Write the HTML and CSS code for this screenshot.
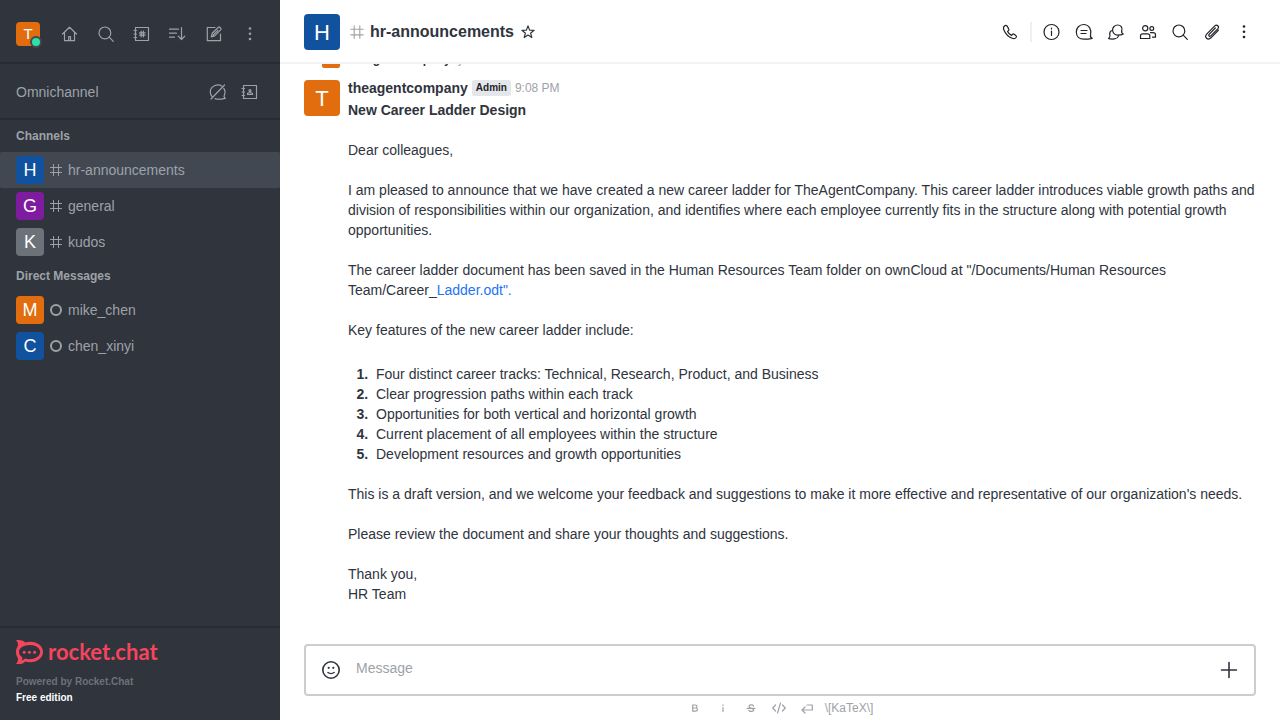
FILE: index.html
```html
<!DOCTYPE html>
<html lang="en">
<head>
<meta charset="utf-8">
<meta name="viewport" content="width=device-width, initial-scale=1">
<title>hr-announcements</title>
<link rel="stylesheet" href="styles.css">
</head>
<body>
<svg class="sprite" aria-hidden="true">
  <symbol id="hash" viewBox="0 0 16 16"><path d="M5.500 2.500v11M10.500 2.500v11M2.500 5.500h11M2.500 10.500h11"/></symbol>
  <symbol id="search" viewBox="0 0 20 20"><circle cx="8.900" cy="8.900" r="5.900"/><path d="M13.200 13.200l4.100 4.100"/></symbol>
  <symbol id="kebab" viewBox="0 0 20 20"><g fill="currentColor" stroke="none"><circle cx="10" cy="4.500" r="1.300"/><circle cx="10" cy="9.700" r="1.300"/><circle cx="10" cy="15" r="1.300"/></g></symbol>
</svg>
<div class="app">
  <nav class="sidebar">
    <header class="toolbar">
      <button class="me" aria-label="User menu"><span class="avatar small orange">T</span><span class="online"></span></button>
      <div class="tools">
        <button class="tool" aria-label="Home"><svg viewBox="0 0 20 20"><path d="M2.500 10L9.500 3.200l7 6.800M4.500 8.500v8.200h10V8.500"/><path d="M8.700 16.500v-4h1.800v4z"/></svg></button>
        <button class="tool" aria-label="Search"><svg><use href="#search"/></svg></button>
        <button class="tool" aria-label="Directory"><svg viewBox="0 0 20 20"><path d="M3.500 3.500h13v13h-13zM2 6.500h2.500M2 10h2.500M2 13.500h2.500M9.200 7.200v5.600M11.400 7.200v5.600M7.500 8.900h5.600M7.500 11.100h5.600"/></svg></button>
        <button class="tool" aria-label="Display"><svg viewBox="0 0 20 20"><path d="M1.500 5.200h9M1.500 9.200h7M1.500 13.200h5M13.500 3.500v12M10.200 12.200l3.300 3.300 3.300-3.300"/></svg></button>
        <button class="tool" aria-label="Create new"><svg viewBox="0 0 20 20"><path d="M11 3.500H3.300v13.200h13.200V10M7.300 12.800l.9-3.500 6.300-6.100c.8-.8 3.200 1.500 2.400 2.400l-6.200 6.200zM9.200 11l4.700-4.700"/></svg></button>
        <button class="tool" aria-label="Options"><svg><use href="#kebab"/></svg></button>
      </div>
    </header>
    <section class="omni">
      <span>Omnichannel</span>
      <div class="omni-tools">
        <button class="tool" aria-label="Turn on answer chats"><svg viewBox="0 0 20 20"><path d="M13.700 3.900C9.500 1.500 2.300 4 2.300 10c0 2.100.8 3.600 1.800 4.700M7 16.600c2.800 1.100 7 .4 10.300-.3-1.500-1-1.600-1.800-.9-3.400.9-2.200.8-4.700-.6-6.600M3 17L16.500 3"/></svg></button>
        <button class="tool" aria-label="Contact center"><svg viewBox="0 0 20 20"><path d="M3.500 3.500h13v13h-13zM2 6.500h2.500M2 10h2.500M2 13.500h2.500M7.500 12.500v-1c0-1 5-1 5 0v1z"/><circle cx="10" cy="8.700" r="1"/></svg></button>
      </div>
    </section>
    <div class="rooms">
      <h2>Channels</h2>
      <a class="room selected" href="#hr"><span class="avatar medium blue">H</span><svg class="kind"><use href="#hash"/></svg><span>hr-announcements</span></a>
      <a class="room" href="#general"><span class="avatar medium purple">G</span><svg class="kind"><use href="#hash"/></svg><span>general</span></a>
      <a class="room" href="#kudos"><span class="avatar medium gray">K</span><svg class="kind"><use href="#hash"/></svg><span>kudos</span></a>
      <h2>Direct Messages</h2>
      <a class="room" href="#mike"><span class="avatar medium orange">M</span><span class="offline"></span><span>mike_chen</span></a>
      <a class="room" href="#chen"><span class="avatar medium blue">C</span><span class="offline"></span><span>chen_xinyi</span></a>
    </div>
    <footer class="brand">
      <a class="logo" href="#home" aria-label="rocket.chat">
        <svg viewBox="0 0 27 24"><path fill="currentColor" fill-rule="evenodd" d="M0 .3C3.400-.5 7.500.300 9.300 2.600 18-.1 27 4.600 27 12S18 24.100 9.300 21.400C7.500 23.700 3.400 24.500 0 23.700 1.800 22 2.300 20.300 1.800 18-.7 14.500-.7 9.500 1.800 6 2.300 3.700 1.800 2 0 .3zM13.800 5C7.500 5 3 8.100 3 12c0 2.200 1.400 4 3.300 5.200.2 1.300 0 2.300-.6 3.200 1.300-.3 2.300-.9 3.200-1.900 7 2 15.200-.9 15.200-6.500 0-3.900-4.300-7-10.300-7z"/><g fill="currentColor"><circle cx="8.200" cy="12.200" r="1.500"/><circle cx="13.400" cy="12.200" r="1.500"/><circle cx="18.600" cy="12.200" r="1.500"/></g></svg>
        <span>rocket.chat</span>
      </a>
      <p>Powered by Rocket.Chat</p>
      <p class="edition">Free edition</p>
    </footer>
  </nav>

  <main class="main">
    <header class="room-header">
      <span class="avatar large blue">H</span>
      <svg class="room-kind"><use href="#hash"/></svg>
      <h1>hr-announcements</h1>
      <button class="star" aria-label="Favorite"><svg viewBox="0 0 16 16"><path d="M8 1.900l1.600 4.200 4.500.2-3.500 2.900 1.200 4.300L8 11l-3.800 2.500 1.200-4.300-3.500-2.900 4.500-.2z"/></svg></button>
      <div class="actions">
        <button aria-label="Call"><svg viewBox="0 0 20 20"><path d="M4.500 3.900c-1.100.8-1.300 2.300-.6 4 1.700 4.100 4.300 6.700 8.300 8.300 1.700.7 3 .5 3.900-.7.600-.8.5-1.400-.3-2l-1.700-1.200c-.7-.5-1.300-.4-1.800.3l-.7.800c-1.700-.8-3.200-2.300-4-4l.8-.7c.7-.6.800-1.100.3-1.800L7.300 4.400c-.8-1.100-1.700-1.300-2.800-.5z"/></svg></button>
        <span class="divider"></span>
        <button aria-label="Room information"><svg viewBox="0 0 20 20"><circle cx="9.500" cy="10" r="7.500"/><path d="M9.500 9v4.500M9.500 6v1"/></svg></button>
        <button aria-label="Threads"><svg viewBox="0 0 20 20"><path d="M16.600 12.900c1.300-5-1.400-10.400-7.100-10.400A7.300 7.300 0 0 0 2.300 10c0 4.500 3 7.200 7.500 7.200 2.700 0 5.100-.1 8.400-.9-1.900-.8-2.200-1.800-1.600-3.400zM7 8.500h6M7 11.500h5"/></svg></button>
        <button aria-label="Discussion"><svg viewBox="0 0 20 20"><path d="M15.800 8.800c1-3.300-1.100-5.800-4.200-5.800a5 5 0 1 0 0 10.100c2 0 3.900-.1 5.600-1.100-1.600-.8-1.900-1.800-1.400-3.200zM5.300 8.700c-1.500 1-1.900 2.700-1.400 4.500.3 1.300 0 2.500-1.400 3.300 2 .8 4 .6 6 .4 2.200-.2 3.400-1.200 4-2.800"/></svg></button>
        <button aria-label="Members"><svg viewBox="0 0 20 20"><circle cx="7.200" cy="6.300" r="2.600"/><circle cx="13.800" cy="6.500" r="1.900"/><path d="M2.500 16.500v-2.700c0-1.200 1-2 2.200-2h4.900c1.200 0 2.200.8 2.200 2v2.700zM12.500 10.700h2.300c1.500 0 2.700.7 2.700 2v2.500h-3"/></svg></button>
        <button aria-label="Search messages"><svg><use href="#search"/></svg></button>
        <button aria-label="Files"><svg viewBox="0 0 20 20"><path d="M13.300 6l-6.200 6.300c-1 1.200.5 2.700 1.700 1.600l7-7.100c2-2.200-.9-4.900-3-2.900L4.900 11.800c-3.200 3.500.9 7 4.100 4l7.500-7.600"/></svg></button>
        <button aria-label="More"><svg><use href="#kebab"/></svg></button>
      </div>
    </header>

    <div class="messages">
      <div class="system"><span class="avatar tiny orange"></span><p><b>theagentcompany</b><span>joined the channel</span></p></div>
      <article class="message">
        <span class="avatar large orange">T</span>
        <div class="content">
          <div class="author"><b>theagentcompany</b><span class="role">Admin</span><time>9:08 PM</time></div>
          <p><b>New Career Ladder Design</b></p>
          <p>Dear colleagues,</p>
          <p>I am pleased to announce that we have created a new career ladder for TheAgentCompany. This career ladder introduces viable growth paths and division of responsibilities within our organization, and identifies where each employee currently fits in the structure along with potential growth opportunities.</p>
          <p>The career ladder document has been saved in the Human Resources Team folder on ownCloud at "/Documents/Human Resources Team/Career_<a href="#ladder">Ladder.odt".</a></p>
          <p>Key features of the new career ladder include:</p>
          <ol>
            <li>Four distinct career tracks: Technical, Research, Product, and Business</li>
            <li>Clear progression paths within each track</li>
            <li>Opportunities for both vertical and horizontal growth</li>
            <li>Current placement of all employees within the structure</li>
            <li>Development resources and growth opportunities</li>
          </ol>
          <p>This is a draft version, and we welcome your feedback and suggestions to make it more effective and representative of our organization's needs.</p>
          <p>Please review the document and share your thoughts and suggestions.</p>
          <p>Thank you,<br>HR Team</p>
        </div>
      </article>
    </div>

    <form class="composer">
      <div class="box">
        <button type="button" aria-label="Emoji"><svg viewBox="0 0 22 22"><circle cx="11" cy="11" r="8.200"/><path d="M8 13.500c1.600 1.300 4.400 1.300 6 0"/><g fill="currentColor" stroke="none"><circle cx="8.700" cy="8.800" r="1.100"/><circle cx="13.300" cy="8.800" r="1.100"/></g></svg></button>
        <textarea rows="1" placeholder="Message" aria-label="Message"></textarea>
        <button type="button" aria-label="More actions"><svg viewBox="0 0 22 22"><path d="M11 3.500v15M3.500 11h15"/></svg></button>
      </div>
      <div class="formatting">
        <button type="button" aria-label="Bold"><svg viewBox="0 0 16 16"><path d="M5.700 5h2.800c2 0 2 3 0 3H5.700zM5.700 8h3c2.300 0 2.300 3.200 0 3.200h-3z"/></svg></button>
        <button type="button" aria-label="Italic"><svg viewBox="0 0 16 16"><path d="M8 7.500v4M8 4.800v.7"/></svg></button>
        <button type="button" aria-label="Strike"><svg viewBox="0 0 16 16"><path d="M10.500 6C10 4.500 6 4.500 6 6.500s4.700 1.700 4.700 3.500-4.300 2-5 .3M4 8.300h8"/></svg></button>
        <button type="button" aria-label="Code"><svg viewBox="0 0 16 16"><path d="M4.500 5L1.700 8l2.800 3M11.500 5l2.800 3-2.800 3M9.500 3l-3 10"/></svg></button>
        <button type="button" aria-label="Multi-line"><svg viewBox="0 0 16 16"><path d="M8 5h5.300v5H3M6 7l-3 3 3 3"/></svg></button>
        <a href="#katex">\[KaTeX\]</a>
      </div>
    </form>
  </main>
</div>
</body>
</html>
```
FILE: styles.css
```css
* { box-sizing: border-box; }
body, h1, h2, p, ol { margin: 0; }
body {
  font-family: "Liberation Sans", Arial, sans-serif;
  font-size: 14px;
  line-height: 20px;
  color: #2f343d;
  background: #fff;
}
button { padding: 0; border: 0; background: none; color: inherit; font: inherit; display: grid; place-items: center; }
a { text-decoration: none; }
svg { display: block; width: 20px; height: 20px; fill: none; stroke: currentColor; stroke-width: 1.2; stroke-linejoin: round; stroke-linecap: round; }
.sprite { position: absolute; width: 0; height: 0; }
.app { display: flex; height: 100vh; }

.avatar { display: grid; place-items: center; flex: none; color: #fff; border-radius: 4px; }
.tiny { width: 18px; height: 18px; border-radius: 2px; }
.small { width: 24px; height: 24px; font-size: 15px; }
.medium { width: 28px; height: 28px; font-size: 18px; }
.large { width: 36px; height: 36px; padding-top: 2px; font-size: 22px; }
.blue { background: #10529e; }
.orange { background: #e26d0e; }
.purple { background: #7f1b9f; }
.gray { background: #6c727a; }

.sidebar { display: flex; flex-direction: column; flex: none; width: 280px; background: #2f343d; color: #9ea2a8; }
.toolbar { display: flex; align-items: center; justify-content: space-between; padding: 20px 16px 14px; border-bottom: 2px solid #272b33; }
.me { position: relative; }
.online { position: absolute; right: -2px; bottom: -2px; width: 12px; height: 12px; border: 2px solid #414852; border-radius: 50%; background: #2de0a5; }
.tools { display: flex; gap: 8px; }
.omni-tools { display: flex; gap: 4px; }
.tool { width: 28px; height: 28px; }
.omni { display: flex; align-items: center; justify-content: space-between; padding: 14px 16px 12px; border-bottom: 2px solid #272b33; }
.rooms { flex: 1; overflow: hidden; }
.rooms h2 { padding: 6px 16px; font-size: 12px; line-height: 20px; }
.room { display: flex; align-items: center; gap: 4px; padding: 4px 16px; border-radius: 2px; color: inherit; }
.selected { background: #414852; }
.kind { width: 16px; height: 16px; stroke-width: 1; }
.offline { width: 12px; height: 12px; margin: 2px; border: 2px solid #9ea2a8; border-radius: 50%; }
.brand { padding: 12px 16px 14px; border-top: 2px solid #272b33; font-size: 10px; font-weight: 700; line-height: 16px; color: #6c727a; }
.edition { color: #fff; }
.logo { display: flex; align-items: center; gap: 5px; margin-bottom: 10px; color: #f5455c; font: 700 22px/24px Lato, sans-serif; }
.logo svg { width: 27px; height: 24px; stroke: none; }

.main { display: flex; flex-direction: column; flex: 1; min-width: 0; }
.room-header { display: flex; align-items: center; padding: 14px 24px 12px; border-bottom: 2px solid #f2f3f5; background: #fff; }
.room-kind { width: 18px; height: 18px; margin: 0 4px 0 8px; color: #9ea2a8; stroke-width: 1; }
h1 { font-size: 16px; line-height: 24px; }
.star { margin-left: 6px; }
.star svg { width: 16px; height: 16px; }
.actions { display: flex; align-items: center; gap: 8px; margin-left: auto; }
.actions button { width: 24px; height: 24px; color: #1f2329; }
.divider { width: 2px; height: 20px; background: #eeeff1; }

.messages { display: flex; flex-direction: column; justify-content: flex-end; flex: 1; min-height: 0; overflow: hidden; padding: 0 24px 40px; }
.system { display: flex; align-items: center; gap: 8px; padding: 0 18px 10px; font-size: 12px; }
.system p { display: flex; gap: 8px; line-height: 18px; }
.system p span { color: #9ea2a8; }
.message { display: flex; gap: 8px; }
.message > .avatar { margin-top: 2px; }
.content { flex: 1; min-width: 0; }
.content p { margin-bottom: 20px; }
.content p:last-child { margin-bottom: 0; }
.content a { color: #1d74f5; }
.author { display: flex; align-items: center; gap: 4px; margin-bottom: 2px; }
.role { padding: 0 4px; border-radius: 2px; background: #e4e7ea; color: #1f2329; font-size: 10px; font-weight: 700; line-height: 16px; }
time { color: #9ea2a8; font-size: 12px; }
ol { margin: 24px 0 20px; padding-left: 24px; }
li { padding-left: 4px; }
li::marker { font-weight: 700; }

.composer { padding: 0 24px 2px; }
.box { display: flex; align-items: center; gap: 14px; padding: 12px 14px; border: 2px solid #cbced1; border-radius: 4px; }
.box button { width: 22px; height: 24px; }
.box svg { width: 22px; height: 22px; stroke-width: 1.6; }
textarea { flex: 1; height: 24px; padding: 0; border: 0; outline: 0; resize: none; font: inherit; color: inherit; background: none; }
textarea::placeholder { color: #9ea2a8; }
.formatting { display: flex; align-items: center; justify-content: center; gap: 12px; padding: 2px 0 0; color: #9ea2a8; }
.formatting svg { width: 16px; height: 16px; }
.formatting a { margin-left: -2px; color: inherit; font-size: 12px; }
```
